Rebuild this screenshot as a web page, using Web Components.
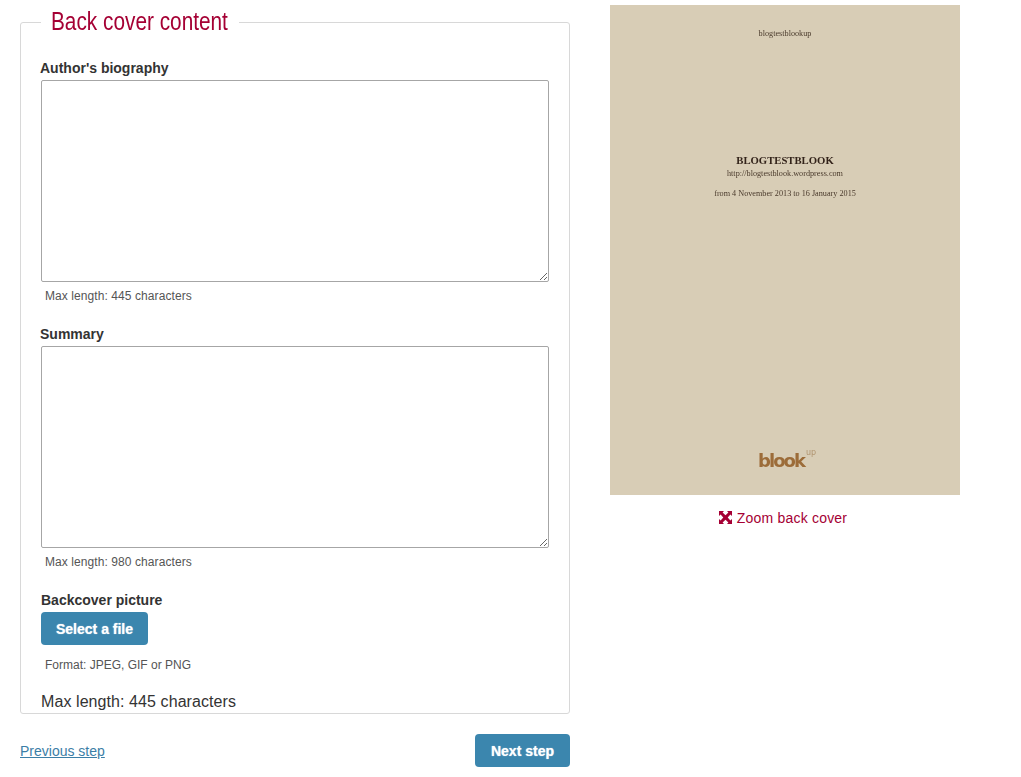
<!DOCTYPE html>
<html>
<head>
<meta charset="utf-8">
<title>Back cover</title>
<style>
  html, body { margin: 0; padding: 0; background: #fff; height: 777px; overflow: hidden; }
  body { font-family: "Liberation Sans", Arial, sans-serif; color: #333; }
</style>
</head>
<body>
<bc-page>
  <bc-panel slot="left" title="Back cover content">
    <bc-field label="Author's biography" hint="Max length: 445 characters"></bc-field>
    <bc-field label="Summary" hint="Max length: 980 characters"></bc-field>
    <bc-upload label="Backcover picture" hint="Format: JPEG, GIF or PNG" note="Max length: 445 characters"></bc-upload>
  </bc-panel>
  <bc-steps slot="left"></bc-steps>
  <bc-cover slot="right"></bc-cover>
</bc-page>

<script>
class Page extends HTMLElement {
  constructor() {
    super();
    this.attachShadow({ mode: 'open' });
    this.shadowRoot.innerHTML = `
    <style>
      :host { display: flex; align-items: flex-start; }
      #left { width: 550px; margin-left: 20px; flex: none; }
      #right { width: 350px; margin-left: 40px; padding-top: 5px; flex: none; }
    </style>
    <div id="left"><slot name="left"></slot></div>
    <div id="right"><slot name="right"></slot></div>
    `;
  }
}

class Panel extends HTMLElement {
  constructor() {
    super();
    this.attachShadow({ mode: 'open' });
    this.shadowRoot.innerHTML = `
    <style>
      :host { display: block; }
      fieldset {
        margin: 0;
        padding: 2px 19px 0 19px;
        height: 714px;
        box-sizing: border-box;
        border: 1px solid #d8d8d8;
        border-radius: 3px;
        min-width: 0;
        overflow: hidden;
      }
      legend {
        margin-left: 1px;
        padding: 0;
        width: 198px;
        height: 44px;
        box-sizing: border-box;
        font-size: 26px;
        line-height: 42px;
        font-weight: normal;
        color: #a50034;
        white-space: nowrap;
      }
      /* no narrow face installed, squeeze the regular one */
      legend span { display: inline-block; margin-left: 10px; transform: scaleX(0.8); transform-origin: left center; }
    </style>
    <fieldset>
      <legend><span></span></legend>
      <slot></slot>
    </fieldset>
    `;
    this.shadowRoot.querySelector('span').textContent = this.getAttribute('title');
  }
}

class Field extends HTMLElement {
  constructor() {
    super();
    this.attachShadow({ mode: 'open' });
    this.shadowRoot.innerHTML = `
    <style>
      :host { display: block; padding-top: 14px; height: 252px; }
      label { display: block; font-size: 14px; line-height: 16px; font-weight: bold; color: #333; }
      textarea {
        display: block;
        box-sizing: border-box;
        width: 508px;
        height: 202px;
        margin: 4px 0 0 1px;
        padding: 4px;
        border: 1px solid #a6a6a6;
        border-radius: 2px;
        background: #fff;
        outline: none;
      }
      p { margin: 7px 0 0 5px; font-size: 12px; line-height: 14px; letter-spacing: 0.08px; color: #555; }
    </style>
    <label></label>
    <textarea></textarea>
    <p></p>
    `;
    this.shadowRoot.querySelector('label').textContent = this.getAttribute('label');
    this.shadowRoot.querySelector('p').textContent = this.getAttribute('hint');
  }
}

class Button extends HTMLElement {
  constructor() {
    super();
    this.attachShadow({ mode: 'open' });
    this.shadowRoot.innerHTML = `
    <style>
      :host {
        display: inline-flex;
        align-items: center;
        justify-content: center;
        height: 33px;
        padding: 0 15px;
        box-sizing: border-box;
        background: #3b86ae;
        border-radius: 4px;
        color: #fff;
        font-size: 14px;
        font-weight: bold;
        text-shadow: 0 0 1px rgba(255,255,255,0.8);
        cursor: pointer;
      }
    </style>
    <slot></slot>
    `;
  }
}

class Upload extends HTMLElement {
  constructor() {
    super();
    this.attachShadow({ mode: 'open' });
    this.shadowRoot.innerHTML = `
    <style>
      :host { display: block; padding: 14px 0 0 1px; }
      label { display: block; font-size: 14px; line-height: 16px; font-weight: bold; color: #333; }
      bc-button { margin-top: 4px; }
      p { margin: 13px 0 0 4px; font-size: 12px; line-height: 14px; color: #555; }
      div { margin-top: 20px; font-size: 16px; line-height: 20px; letter-spacing: 0.08px; color: #333; }
    </style>
    <label></label>
    <bc-button>Select a file</bc-button>
    <p></p>
    <div></div>
    `;
    this.shadowRoot.querySelector('label').textContent = this.getAttribute('label');
    this.shadowRoot.querySelector('p').textContent = this.getAttribute('hint');
    this.shadowRoot.querySelector('div').textContent = this.getAttribute('note');
  }
}

class Steps extends HTMLElement {
  constructor() {
    super();
    this.attachShadow({ mode: 'open' });
    this.shadowRoot.innerHTML = `
    <style>
      :host { display: flex; justify-content: space-between; align-items: center; margin-top: 20px; }
      a { color: #3b7ea6; font-size: 14px; text-decoration: underline; }
      bc-button { padding: 0 16px; }
    </style>
    <a href="#">Previous step</a>
    <bc-button>Next step</bc-button>
    `;
  }
}

class Cover extends HTMLElement {
  constructor() {
    super();
    this.attachShadow({ mode: 'open' });
    this.shadowRoot.innerHTML = `
    <style>
      :host { display: block; }
      #sheet {
        height: 490px;
        box-sizing: border-box;
        background: #d8cdb6;
        display: flex;
        flex-direction: column;
        align-items: center;
        font-family: "Liberation Serif", "Times New Roman", serif;
        color: #4a3a2c;
      }
      /* the cover is a scaled picture in the original, so soften its text */
      #sheet > * { filter: blur(0.3px); }
      #blog { margin-top: 23px; font-size: 8.2px; line-height: 11px; }
      h1 { margin: 115px 0 0; font-size: 10.7px; line-height: 13px; font-weight: bold; color: #33231a; }
      #url { margin-top: 1px; font-size: 8.2px; line-height: 11px; }
      #dates { margin-top: 9px; font-size: 8.2px; line-height: 11px; }
      #logo {
        margin-top: auto;
        margin-bottom: 24px;
        margin-right: 8px;
        font-family: "DejaVu Sans", sans-serif;
        font-size: 18px;
        line-height: 20px;
        font-weight: bold;
        letter-spacing: -2px;
        color: #9c6c39;
        position: relative;
      }
      #logo sup {
        position: absolute;
        left: 100%;
        top: -2px;
        margin-left: 2px;
        font-size: 8px;
        line-height: 8px;
        font-weight: normal;
        letter-spacing: 0;
        color: #b09470;
      }
      #zoom {
        display: flex;
        align-items: center;
        justify-content: center;
        gap: 5px;
        margin-top: 14px;
        padding-right: 4px;
        font-size: 14px;
        line-height: 18px;
        letter-spacing: 0.2px;
        color: #a50034;
      }
      svg { display: block; width: 13px; height: 13px; margin-top: -2px; }
    </style>
    <div id="sheet">
      <div id="blog">blogtestblookup</div>
      <h1>BLOGTESTBLOOK</h1>
      <div id="url">http://blogtestblook.wordpress.com</div>
      <div id="dates">from 4 November 2013 to 16 January 2015</div>
      <div id="logo">blook<sup>up</sup></div>
    </div>
    <div id="zoom">
      <svg viewBox="0 0 13 13" fill="#a50034">
        <path d="M0 0h5L3.6 1.6 6.5 4.3 9.4 1.6 8 0h5v5l-1.6-1.4L8.7 6.5l2.7 2.9L13 8v5H8l1.4-1.6L6.5 8.7 3.6 11.4 5 13H0V8l1.6 1.4L4.3 6.5 1.6 3.6 0 5z"/>
      </svg>
      <span>Zoom back cover</span>
    </div>
    `;
  }
}

customElements.define('bc-button', Button);
customElements.define('bc-page', Page);
customElements.define('bc-panel', Panel);
customElements.define('bc-field', Field);
customElements.define('bc-upload', Upload);
customElements.define('bc-steps', Steps);
customElements.define('bc-cover', Cover);
</script>
</body>
</html>
